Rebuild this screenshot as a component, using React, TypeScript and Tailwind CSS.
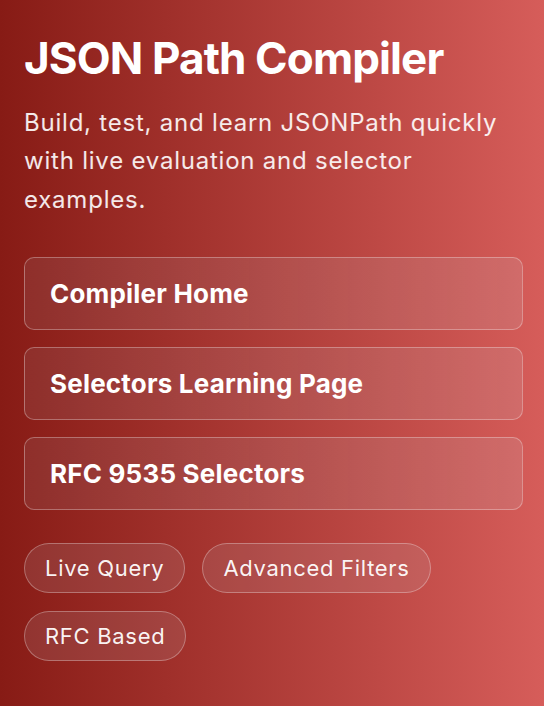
const links = ["Compiler Home", "Selectors Learning Page", "RFC 9535 Selectors"];
const tags = ["Live Query", "Advanced Filters", "RFC Based"];

export default function App() {
  return (
    <div className="min-h-[706px] w-full bg-[linear-gradient(90deg,#871b15,#d65d5a)] pl-6 pr-[21px] pt-8 font-['Inter','Liberation_Sans',sans-serif] text-white">
      <h1 className="text-[44px] font-bold leading-[1.2] tracking-[-0.02em]">JSON Path Compiler</h1>
      <p className="mt-[19px] text-[24px] leading-[38.5px] tracking-[0.78px] text-white/90">
        Build, test, and learn JSONPath quickly with live evaluation and selector examples.
      </p>

      <nav className="mt-[38px] flex flex-col gap-[17px]">
        {links.map((label) => (
          <a
            key={label}
            href="#"
            className="block rounded-[10px] border border-white/30 bg-[linear-gradient(90deg,rgba(170,170,180,0.12),rgba(200,200,205,0.16))] px-[25px] py-5 text-[26px] font-bold leading-[31px] tracking-[0.2px]"
          >
            {label}
          </a>
        ))}
      </nav>

      <div className="mt-[33px] flex flex-wrap gap-x-[17px] gap-y-[18px]">
        {tags.map((tag) => (
          <span
            key={tag}
            className="rounded-full border border-white/30 bg-[rgba(190,190,195,0.14)] px-5 py-[10px] text-[22px] leading-[28px] tracking-[0.7px] text-white/95"
          >
            {tag}
          </span>
        ))}
      </div>
    </div>
  );
}
